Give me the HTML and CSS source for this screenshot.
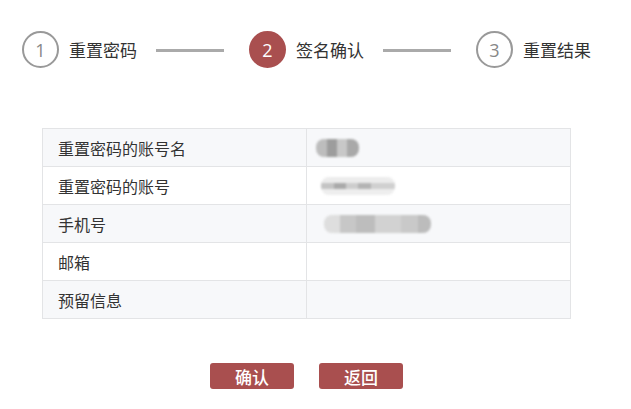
FILE: index.html
```html
<!DOCTYPE html>
<html lang="zh-CN">

<head>
    <meta charset="UTF-8">
    <meta name="viewport" content="width=device-width, initial-scale=1.0">
    <title>重置密码</title>
    <link rel="stylesheet" href="styles.css">
</head>

<body>
    <div class="page">
        <!-- 步骤条 -->
        <div class="steps">
            <div class="step">
                <span class="step-num">1</span>
                <span class="step-label">重置密码</span>
            </div>
            <span class="step-line"></span>
            <div class="step">
                <span class="step-num active">2</span>
                <span class="step-label">签名确认</span>
            </div>
            <span class="step-line"></span>
            <div class="step">
                <span class="step-num">3</span>
                <span class="step-label">重置结果</span>
            </div>
        </div>

        <!-- 账号信息 -->
        <table class="info">
            <tr>
                <td>重置密码的账号名</td>
                <td><span class="masked masked-name"></span></td>
            </tr>
            <tr>
                <td>重置密码的账号</td>
                <td><span class="masked masked-account"></span></td>
            </tr>
            <tr>
                <td>手机号</td>
                <td><span class="masked masked-phone"></span></td>
            </tr>
            <tr>
                <td>邮箱</td>
                <td></td>
            </tr>
            <tr>
                <td>预留信息</td>
                <td></td>
            </tr>
        </table>

        <div class="actions">
            <button type="button">确认</button>
            <button type="button">返回</button>
        </div>
    </div>
</body>

</html>
```

FILE: styles.css
```css
/* styles.css */
body {
    margin: 0;
    background: #fff;
    color: #333;
    font-family: "Noto Sans CJK SC", "Microsoft YaHei", sans-serif;
}

.page {
    width: 631px;
}

.steps {
    display: flex;
    align-items: center;
    padding: 31px 0 0 22px;
}

.step {
    display: flex;
    align-items: center;
}

.step-num {
    box-sizing: border-box;
    width: 37px;
    height: 37px;
    border: 2px solid #999;
    border-radius: 50%;
    display: flex;
    align-items: center;
    justify-content: center;
    font-family: "Open Sans", "Liberation Sans", sans-serif;
    font-size: 18px;
    color: #888;
}

.step-num.active {
    background-color: #a94f4f;
    border-color: #a94f4f;
    color: #fff;
}

.step-label {
    margin-left: 10px;
    font-size: 17px;
    line-height: 20px;
    color: #333;
}

.step-line {
    width: 68px;
    height: 3px;
    background-color: #aaa;
    margin: 2px 25px 0 19px;
}

.info {
    margin: 60px 0 0 42px;
    width: 529px;
    border-collapse: collapse;
    font-size: 16px;
}

.info tr {
    height: 38px;
}

.info td {
    padding: 0 0 0 15px;
    border: 1px solid #e3e4e6;
    vertical-align: middle;
}

.info td:first-child {
    width: 248px;
}

.info tr:nth-child(odd) td {
    background-color: #f7f8fa;
}

.masked {
    display: block;
    height: 18px;
    border-radius: 8px;
    filter: blur(1.2px);
}

.masked-name {
    width: 43px;
    margin-left: -6px;
    background:
        linear-gradient(90deg, #bdbdbd 0 25%, #9d9d9d 25% 50%, #c8c8c8 50% 72%, #a9a9a9 72% 100%);
}

.masked-account {
    width: 74px;
    margin-left: -1px;
    background:
        linear-gradient(180deg, #ececec 0 35%, transparent 35% 65%, #eeeeee 65% 100%),
        linear-gradient(90deg, #c4c4c4 0 18%, #aaaaaa 18% 34%, #cdcdcd 34% 50%, #b4b4b4 50% 68%, #d0d0d0 68% 100%);
}

.masked-phone {
    width: 107px;
    margin-left: 2px;
    background:
        linear-gradient(90deg, #dedede 0 15%, #c7c7c7 15% 30%, #bdbdbd 30% 48%, #d2d2d2 48% 72%, #c9c9c9 72% 88%, #bcbcbc 88% 100%);
}

.actions {
    display: flex;
    justify-content: center;
    gap: 25px;
    margin: 44px 0 0 0;
    padding-left: 42px;
    width: 529px;
}

button {
    width: 84px;
    height: 26px;
    padding: 0;
    background-color: #a94f4f;
    color: #fff;
    border: none;
    border-radius: 3px;
    font-family: "Noto Sans CJK SC", "Microsoft YaHei", sans-serif;
    font-size: 17px;
    font-weight: 500;
    cursor: pointer;
}

button:hover {
    background-color: #973f3f;
}
```
